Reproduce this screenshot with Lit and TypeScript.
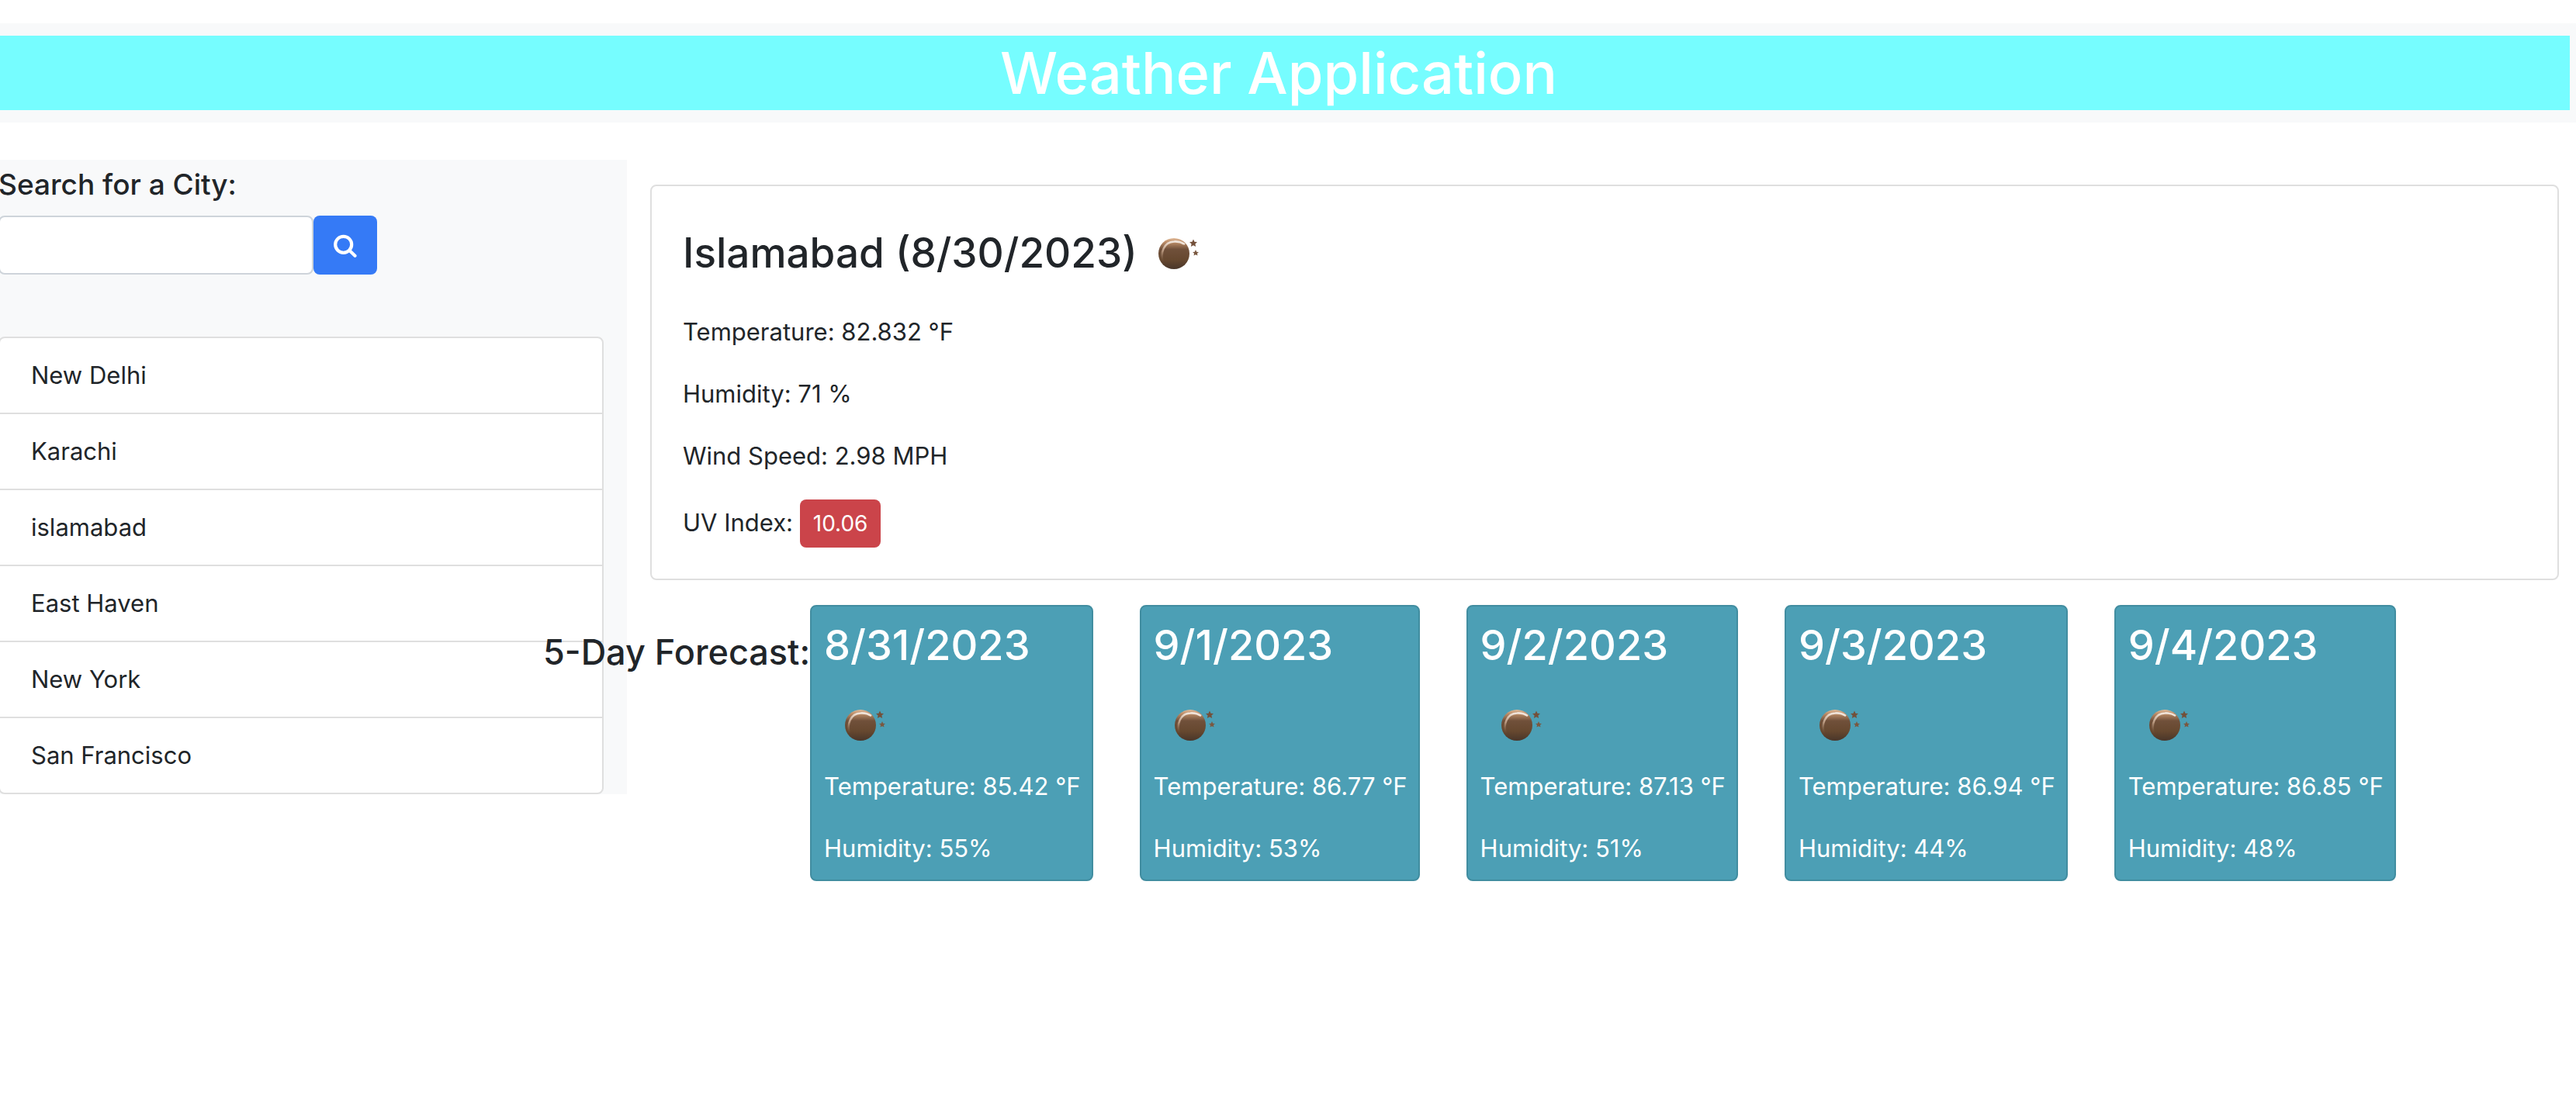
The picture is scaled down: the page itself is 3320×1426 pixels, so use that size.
import { LitElement, html, css, svg } from "lit";
import { customElement, property } from "lit/decorators.js";

const cities = ["New Delhi", "Karachi", "islamabad", "East Haven", "New York", "San Francisco"];

const forecast = [
  { date: "8/31/2023", temp: "85.42", humidity: 55 },
  { date: "9/1/2023", temp: "86.77", humidity: 53 },
  { date: "9/2/2023", temp: "87.13", humidity: 51 },
  { date: "9/3/2023", temp: "86.94", humidity: 44 },
  { date: "9/4/2023", temp: "86.85", humidity: 48 },
];

@customElement("moon-icon")
class MoonIcon extends LitElement {
  static styles = css`
    :host { display: inline-block; width: 100px; height: 100px; }
    .icon { display: block; width: 100px; height: 100px; }
  `;
  render() {
    const star = "M0-5 1.5-1.7 5-1.4 2.4 1 3.1 4.4 0 2.7-3.1 4.4-2.4 1-5-1.4-1.5-1.7Z";
    return html`<svg class="icon" viewBox="-1 4 100 100" role="img" aria-label="clear night">
      ${svg`<defs>
        <linearGradient id="body" x1="0" y1="0" x2="0" y2="1">
          <stop offset="0" stop-color="#e2bd9c"/><stop offset=".12" stop-color="#bf8f6a"/>
          <stop offset=".36" stop-color="#70503a"/><stop offset=".7" stop-color="#66482f"/>
          <stop offset="1" stop-color="#49362a"/>
        </linearGradient>
        <linearGradient id="shine" x1="0.3" y1="0" x2="0.1" y2="1">
          <stop offset="0" stop-color="#f0e4da"/><stop offset=".5" stop-color="#c9a88e" stop-opacity=".8"/>
          <stop offset="1" stop-color="#7a5a42" stop-opacity="0"/>
        </linearGradient>
      </defs>
      <circle cx="46" cy="51" r="20" fill="url(#body)"/>
      <path d="M32 62C28 50 33 36 46 35.500 52 35 57 37 60 39" fill="none" stroke="url(#shine)" stroke-width="2.600"/>
      <path d=${star} transform="translate(71 37.500)" fill="#73503a"/>
      <path d=${star} transform="translate(74 50) scale(.8)" fill="#7a5840"/>`}
    </svg>`;
  }
}

@customElement("forecast-card")
class ForecastCard extends LitElement {
  static styles = css`
    :host { display: block; box-sizing: border-box; padding: 16px 14px 16px 16px; color: #fff; white-space: nowrap;
      background: #4c9fb5; border: 2px solid #418da0; border-radius: 8px; }
    .date { margin: 0; font-size: 54px; line-height: 68px; font-weight: 500; }
    .picture { display: block; margin: 22px 0 2px; }
    .line { margin: 0 0 32px; line-height: 48px; }
    .line:last-child { margin-bottom: 0; }
  `;
  @property() date = "";
  @property() temp = "";
  @property({ type: Number }) humidity = 0;
  render() {
    return html`
      <h2 class="date">${this.date}</h2>
      <moon-icon class="picture"></moon-icon>
      <p class="line">Temperature: ${this.temp} °F</p>
      <p class="line">Humidity: ${this.humidity}%</p>`;
  }
}

@customElement("app-root")
class AppRoot extends LitElement {
  static styles = css`
    :host { display: block; font: 400 31px/48px Inter, "Liberation Sans", sans-serif; color: #212529; background: #fff; padding-top: 30px; }
    h1, h2, h3, p, ul { margin: 0; }
    .banner { background: #f8f9fa; padding: 16px 8px 16px 0; }
    .title { background: #76fdff; color: #fff; text-align: center; font-size: 74px; line-height: 96px; font-weight: 500; padding-right: 16px; }
    .layout { display: grid; grid-template-columns: 808px minmax(0, 1fr); align-items: start; margin-top: 48px; }
    .sidebar { background: #f8f9fa; padding-right: 30px; }
    .search-label { display: block; font-size: 37px; line-height: 48px; font-weight: 500; padding: 8px 0 16px; margin-left: -2px; }
    .search { display: flex; margin-left: -2px; }
    .field { box-sizing: border-box; width: 406px; height: 76px; border: 2px solid #ced4da; border-radius: 8px; padding: 12px 24px; font: inherit; background: #fff; }
    .go { width: 82px; height: 76px; border: 0; border-radius: 8px; background: #357af6; padding: 0; display: grid; place-items: center; }
    .glass { width: 32px; height: 32px; }
    .cities { list-style: none; padding: 0; margin: 80px 0 0 -2px; background: #fff; border: 2px solid #dfdfdf; border-radius: 8px; }
    .city { padding: 24px 40px; }
    .city + .city { border-top: 2px solid #dfdfdf; }
    .current { margin: 32px 22px 32px 30px; padding: 40px; border: 2px solid #dfdfdf; border-radius: 8px; }
    .heading { display: flex; align-items: flex-start; font-size: 53px; line-height: 92px; font-weight: 500; margin-bottom: 24px; }
    .row { padding-bottom: 32px; }
    .row:last-child { padding-bottom: 0; }
    .badge { display: inline-block; background: #cb444a; color: #fff; font-size: 28px; line-height: 42px; padding: 10px 17px; border-radius: 8px; }
    .forecast { display: flex; align-items: flex-start; gap: 60px; margin-left: -108px; }
    .forecast-title { font-size: 45px; line-height: 58px; font-weight: 500; white-space: nowrap; padding-top: 32px; margin-right: -60px; }
  `;
  render() {
    return html`
      <header class="banner"><h1 class="title">Weather Application</h1></header>
      <div class="layout">
        <aside class="sidebar">
          <label class="search-label" for="city">Search for a City:</label>
          <form class="search" @submit=${(e: Event) => e.preventDefault()}>
            <input class="field" id="city" type="text" />
            <button class="go" aria-label="Search">
              <svg class="glass" viewBox="0 0 32 32" fill="none" stroke="#fff" stroke-linecap="round">
                <circle cx="13.700" cy="15.300" r="10.500" stroke-width="4.200" /><path d="M21.500 23 28.500 29.700" stroke-width="4.200" />
              </svg>
            </button>
          </form>
          <ul class="cities">${cities.map((c) => html`<li class="city">${c}</li>`)}</ul>
        </aside>
        <main>
          <section class="current">
            <h2 class="heading">Islamabad (8/30/2023)<moon-icon></moon-icon></h2>
            <p class="row">Temperature: 82.832 °F</p>
            <p class="row">Humidity: 71 %</p>
            <p class="row">Wind Speed: 2.98 MPH</p>
            <p class="row">UV Index: <span class="badge">10.06</span></p>
          </section>
          <section class="forecast">
            <h3 class="forecast-title">5-Day Forecast:</h3>
            ${forecast.map((d) => html`<forecast-card .date=${d.date} .temp=${d.temp} .humidity=${d.humidity}></forecast-card>`)}
          </section>
        </main>
      </div>`;
  }
}
